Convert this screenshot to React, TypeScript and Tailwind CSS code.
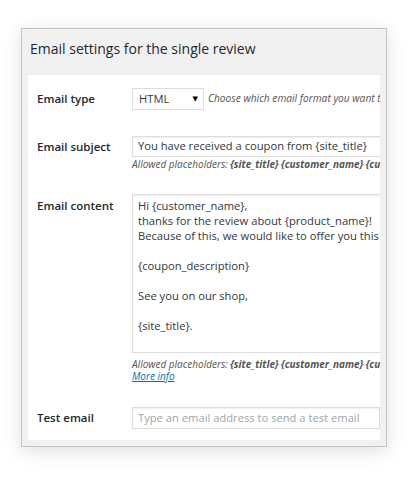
import React from 'react';

const placeholders = (
  <>
    Allowed placeholders: <b>{'{site_title}'}</b> <b>{'{customer_name}'}</b> <b>{'{customer_last_name}'}</b>
  </>
);

const EmailSettings = () => {
  const content = `Hi {customer_name},
thanks for the review about {product_name}!
Because of this, we would like to offer you this coupon as a little gift.

{coupon_description}

See you on our shop,

{site_title}.`;

  return (
    <div className="min-h-screen bg-white pt-[28px] pl-[21px]" style={{ fontFamily: '"Open Sans", "DejaVu Sans", sans-serif' }}>
      <div className="w-[366px] h-[419px] border border-[#c3c3c3] bg-[#f1f1f1] shadow-[0_4px_18px_rgba(0,0,0,0.13)] px-[6px] pb-[6px] flex flex-col">
        {/* Header */}
        <div className="h-[46px] shrink-0 flex items-center pl-[2px] pb-[5px] border-b border-[#ececec]">
          <h2 className="text-[14px] text-[#23282d] leading-none">Email settings for the single review</h2>
        </div>

        {/* Form body */}
        <div className="flex-1 bg-white overflow-hidden pt-[13px] text-[#23282d]">
          {/* Email type */}
          <div className="flex">
            <div className="w-[104px] shrink-0 pl-[9px] text-[11.5px] font-semibold leading-[22px]">Email type</div>
            <div className="flex items-center whitespace-nowrap">
              <div className="w-[72px] h-[22px] border border-[#ddd] bg-white flex items-center justify-between pl-[6px] pr-[5px] text-[11.2px] text-[#32373c]">
                <span>HTML</span>
                <span className="text-[7px] text-black">▼</span>
              </div>
              <span className="ml-[4px] text-[10.2px] italic text-[#555]">Choose which email format you want to use</span>
            </div>
          </div>

          {/* Email subject */}
          <div className="flex mt-[26px]">
            <div className="w-[104px] shrink-0 pl-[9px] text-[11.5px] font-semibold leading-[21px]">Email subject</div>
            <div className="whitespace-nowrap">
              <div className="w-[420px] h-[21px] border border-[#ddd] shadow-[inset_0_1px_2px_rgba(0,0,0,0.07)] flex items-center pl-[5px] text-[11.2px] text-[#32373c]">
                You have received a coupon from {'{site_title}'}
              </div>
              <div className="text-[10px] italic text-[#555] leading-[13px] pt-[1px]">{placeholders}</div>
            </div>
          </div>

          {/* Email content */}
          <div className="flex mt-[23px]">
            <div className="w-[104px] shrink-0 pl-[9px] pt-[4px] text-[11.5px] font-semibold leading-[15px]">Email content</div>
            <div className="whitespace-nowrap">
              <div className="w-[420px] h-[159px] border border-[#ddd] shadow-[inset_0_1px_2px_rgba(0,0,0,0.07)] px-[5px] pt-[3px] text-[11.2px] leading-[15px] text-[#32373c] whitespace-pre">
                {content}
              </div>
              <div className="mt-[5px] text-[10px] italic text-[#555] leading-[12px]">{placeholders}</div>
              <a href="#" className="block text-[10px] italic text-[#0073aa] underline leading-[12px]">More info</a>
            </div>
          </div>

          {/* Test email */}
          <div className="flex mt-[25px]">
            <div className="w-[104px] shrink-0 pl-[9px] text-[11.5px] font-semibold leading-[22px]">Test email</div>
            <div className="w-[420px] h-[22px] border border-[#ddd] shadow-[inset_0_1px_2px_rgba(0,0,0,0.07)] flex items-center pl-[5px] text-[11.2px] text-[#a0a5aa] whitespace-nowrap">
              Type an email address to send a test email
            </div>
          </div>
        </div>
      </div>
    </div>
  );
};

export default EmailSettings;
